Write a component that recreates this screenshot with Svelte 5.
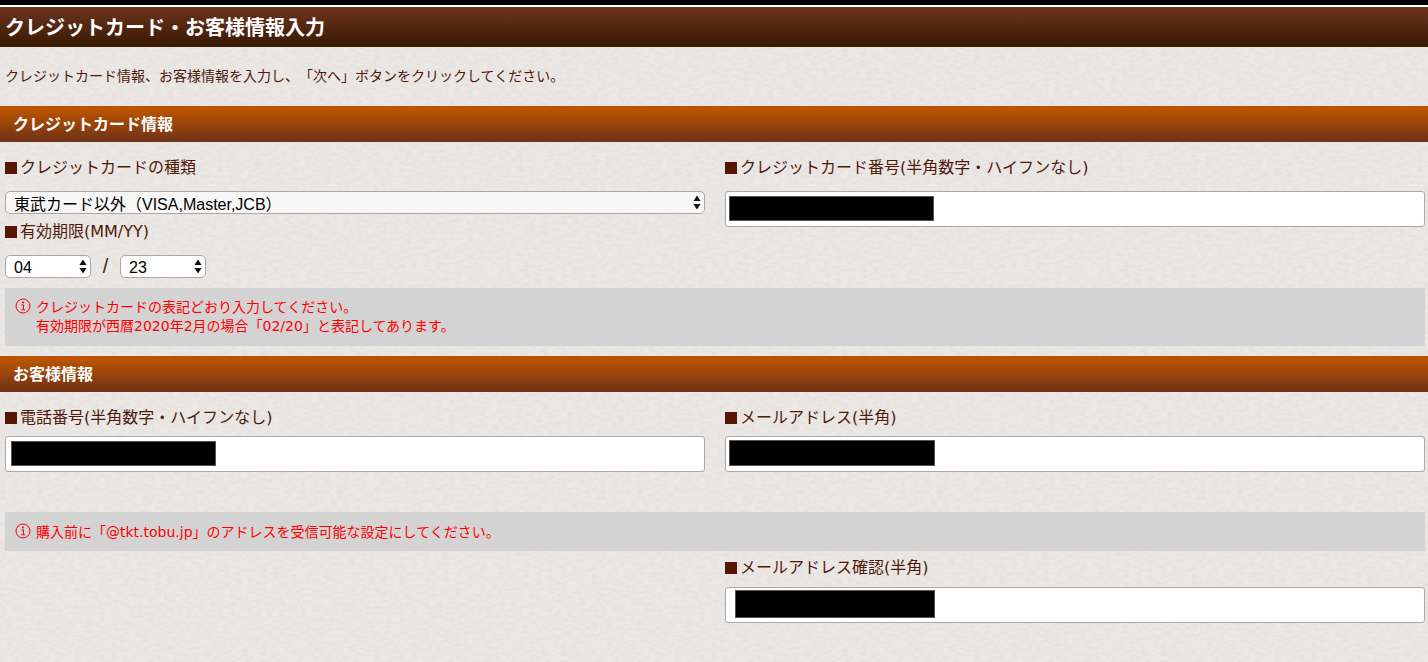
<script>
  const months = ['04'];
  const years = ['23'];
</script>

{#snippet arrows()}
  <svg class="arrows" width="8" height="15" viewBox="0 0 8 15" aria-hidden="true">
    <path d="M4 0.5 L7.6 6 H0.4 Z M4 14.5 L7.6 9 H0.4 Z" fill="#111" />
  </svg>
{/snippet}

{#snippet infoIcon()}
  <svg class="info" width="16" height="16" viewBox="0 0 16 16" aria-hidden="true">
    <circle cx="8" cy="8" r="7" fill="none" stroke="#f00" stroke-width="1" />
    <circle cx="8" cy="4.4" r="1" fill="#f00" />
    <path d="M6.4 6.9 H8.5 V11.5 M6.2 11.8 H10" fill="none" stroke="#f00" stroke-width="1" />
  </svg>
{/snippet}

<div class="topline"></div>
<h1>クレジットカード・お客様情報入力</h1>
<p class="lead">クレジットカード情報、お客様情報を入力し、「次へ」ボタンをクリックしてください。</p>

<h2>クレジットカード情報</h2>
<div class="grid first">
  <div class="col">
    <div class="label">クレジットカードの種類</div>
    <div class="sel wide">
      <select class="light"><option>東武カード以外（VISA,Master,JCB）</option></select>
      {@render arrows()}
    </div>
    <div class="label second">有効期限(MM/YY)</div>
    <div class="dates">
      <div class="sel small">
        <select>{#each months as m}<option>{m}</option>{/each}</select>
        {@render arrows()}
      </div>
      <span class="slash">/</span>
      <div class="sel small">
        <select>{#each years as y}<option>{y}</option>{/each}</select>
        {@render arrows()}
      </div>
    </div>
  </div>
  <div class="col">
    <div class="label">クレジットカード番号(半角数字・ハイフンなし)</div>
    <div class="field"><input type="text" /><span class="mask m1"></span></div>
  </div>
</div>
<div class="notice two">
  {@render infoIcon()}
  <div>クレジットカードの表記どおり入力してください。<br />有効期限が西暦2020年2月の場合「02/20」と表記してあります。</div>
</div>

<h2 class="customer">お客様情報</h2>
<div class="grid tel">
  <div class="col">
    <div class="label">電話番号(半角数字・ハイフンなし)</div>
    <div class="field"><input type="text" /><span class="mask m2"></span></div>
  </div>
  <div class="col">
    <div class="label">メールアドレス(半角)</div>
    <div class="field"><input type="text" /><span class="mask m3"></span></div>
  </div>
</div>
<div class="notice one">
  {@render infoIcon()}
  <div>購入前に「@tkt.tobu.jp」のアドレスを受信可能な設定にしてください。</div>
</div>
<div class="grid confirm">
  <div class="col"></div>
  <div class="col">
    <div class="label">メールアドレス確認(半角)</div>
    <div class="field"><input type="text" /><span class="mask m4"></span></div>
  </div>
</div>

<style>
  :global(body) {
    margin: 0;
    height: 662px;
    overflow: hidden;
    background-color: #ebe8e5;
    background-image: url("data:image/svg+xml,%3Csvg xmlns='http://www.w3.org/2000/svg' width='300' height='300'%3E%3Cfilter id='n'%3E%3CfeTurbulence type='fractalNoise' baseFrequency='0.16 0.32' numOctaves='3' seed='7' stitchTiles='stitch'/%3E%3CfeColorMatrix values='0 0 0 0 0.45 0 0 0 0 0.42 0 0 0 0 0.38 0 0 0 0.22 -0.07'/%3E%3C/filter%3E%3Crect width='300' height='300' filter='url(%23n)'/%3E%3C/svg%3E");
    font-family: "Liberation Sans", "Noto Sans CJK JP", sans-serif;
    color: #4f1a0c;
    text-spacing-trim: space-all;
    text-autospace: no-autospace;
  }
  .topline {
    height: 5px;
    background: #000;
    border-bottom: 2px solid #fff;
  }
  h1 {
    margin: 0;
    height: 40px;
    padding-left: 5px;
    font-size: 20px;
    line-height: 42px;
    font-weight: 700;
    color: #fff;
    background: linear-gradient(#6e331e, #371a03);
  }
  .lead {
    margin: 0;
    height: 59px;
    padding: 20px 0 0 5px;
    box-sizing: border-box;
    font-size: 14px;
    line-height: 19px;
  }
  h2 {
    margin: 0;
    height: 36px;
    padding-left: 13px;
    font-size: 16px;
    line-height: 37px;
    font-weight: 700;
    color: #fff;
    background: linear-gradient(#bb5400 10%, #6e3118);
  }
  h2.customer { margin-top: 10px; }
  .grid {
    display: grid;
    grid-template-columns: 700px 700px;
    column-gap: 20px;
    padding-left: 5px;
  }
  .first { height: 130px; padding-top: 16px; }
  .tel { padding-top: 16px; height: 104px; }
  .tel .label { margin-bottom: 8px; }
  .confirm { height: 95px; padding-top: 7px; }
  .confirm .label { margin-bottom: 9px; }
  .label {
    display: flex;
    align-items: center;
    height: 20px;
    font-family: "DejaVu Sans", "Noto Sans CJK JP", sans-serif;
    font-size: 16px;
    line-height: 20px;
    margin-bottom: 13px;
  }
  .label::before {
    content: "";
    width: 12px;
    height: 12px;
    margin-right: 3px;
    background: #551703;
    flex: none;
  }
  .label.second { margin: 8px 0 13px; }
  .sel { position: relative; box-sizing: border-box; }
  .sel select {
    appearance: none;
    display: block;
    width: 100%;
    height: 100%;
    box-sizing: border-box;
    margin: 0;
    padding: 1px 0 0 8px;
    border: 1px solid #a9a9a9;
    border-radius: 5px;
    background: #fff;
    font: 16px/21px "Liberation Sans", "Noto Sans CJK JP", sans-serif;
    color: #000;
  }
  .sel select.light { background: #f7f7f7; padding-top: 2px; }
  .wide { height: 23px; }
  .small { width: 86px; height: 23px; }
  .arrows { position: absolute; right: 4px; top: 4px; pointer-events: none; }
  .dates { display: flex; align-items: center; }
  .slash { width: 29px; text-align: center; font-size: 20px; line-height: 23px; font-weight: 300; }
  .field { position: relative; height: 36px; }
  .field input {
    display: block;
    width: 100%;
    height: 100%;
    box-sizing: border-box;
    margin: 0;
    border: 1px solid #a9a9a9;
    border-radius: 3px;
    background: #fff;
  }
  .mask {
    position: absolute;
    box-sizing: border-box;
    background: #000;
    border: 1px solid #555;
    height: 25px;
    top: 5px;
  }
  .m1 { left: 4px; width: 205px; }
  .m2 { left: 6px; width: 205px; }
  .m3 { left: 4px; width: 206px; top: 4px; height: 26px; }
  .m4 { left: 10px; width: 200px; top: 3px; height: 28px; }
  .notice {
    display: flex;
    margin-left: 5px;
    width: 1420px;
    box-sizing: border-box;
    background: #d3d3d3;
    color: #f00;
    font-family: "DejaVu Sans", "Noto Sans CJK JP", sans-serif;
    font-size: 14px;
    line-height: 19px;
    padding-left: 10px;
  }
  .notice.two { height: 58px; padding-top: 10px; }
  .notice.one { height: 39px; padding-top: 11px; }
  .info { flex: none; margin: 0 5px 0 0; }
</style>
